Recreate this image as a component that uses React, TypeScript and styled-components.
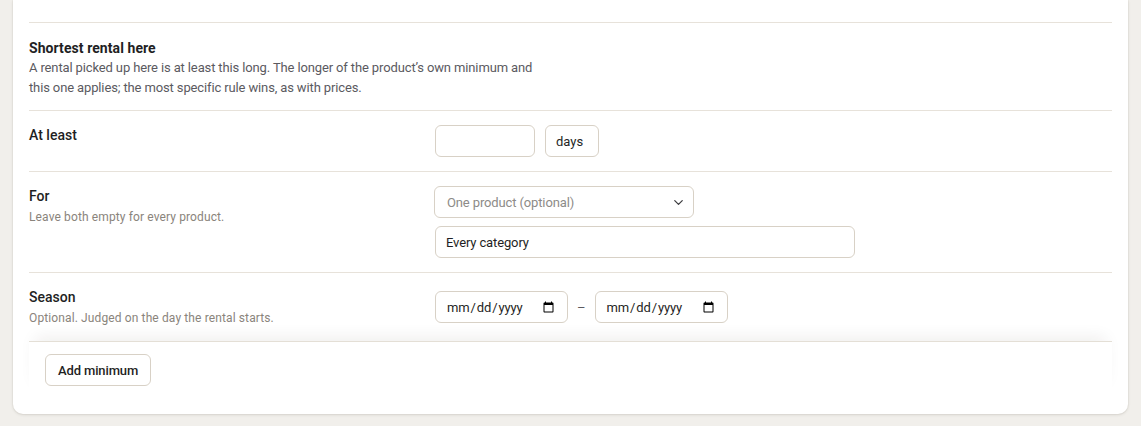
import React from "react";
import styled, { createGlobalStyle } from "styled-components";
import { ChevronDown } from "lucide-react";

const GlobalStyle = createGlobalStyle`
  html, body {
    margin: 0;
    background: #f1efeb;
  }
  body {
    font-family: Roboto, "Liberation Sans", sans-serif;
    color: #1f1f24;
  }
`;

const Page = styled.div`
  padding: 0 13px 12px;
`;

const Card = styled.div`
  background: #fff;
  border-radius: 0 0 10px 10px;
  box-shadow: 0 1px 3px rgba(60, 50, 30, 0.12), 0 0 0 1px rgba(60, 50, 30, 0.03);
  padding: 22px 16px 16px;
`;

const Section = styled.div`
  border-top: 1px solid #e7e2da;
  padding: 15px 0 12px;
`;

const Title = styled.div`
  font-size: 14px;
  font-weight: 700;
  line-height: 20px;
  letter-spacing: 0.005em;
  color: #1f1f24;
`;

const Description = styled.p`
  margin: 0;
  max-width: 520px;
  font-size: 13px;
  line-height: 20px;
  letter-spacing: -0.01em;
  color: #5b5a5f;
`;

const Row = styled.div<{ $center?: boolean }>`
  display: grid;
  grid-template-columns: 390px 1fr;
  column-gap: 16px;
  align-items: ${(p) => (p.$center ? "center" : "start")};
  border-top: 1px solid #e7e2da;
  padding: 14px 0;
`;

const LabelCol = styled.div`
  display: flex;
  flex-direction: column;
  gap: 2px;
`;

const Label = styled.div`
  font-size: 14px;
  font-weight: 500;
  line-height: 20px;
  color: #1f1f24;
`;

const Help = styled.div`
  font-size: 12px;
  line-height: 18px;
  letter-spacing: 0.01em;
  color: #8a847c;
`;

const Fields = styled.div`
  display: flex;
  flex-direction: column;
  align-items: flex-start;
  gap: 8px;
`;

const Inline = styled.div<{ $gap: number }>`
  display: flex;
  align-items: center;
  gap: ${(p) => p.$gap}px;
`;

const TextInput = styled.input<{ $width: number }>`
  box-sizing: border-box;
  width: ${(p) => p.$width}px;
  height: 32px;
  padding: 0 10px;
  border: 1px solid #d8d1c6;
  border-radius: 6px;
  background: #fff;
  font-family: Roboto, "Liberation Sans", sans-serif;
  font-size: 13px;
  letter-spacing: -0.01em;
  color: #1f1f24;
  outline: none;
`;

const Unit = styled.div`
  box-sizing: border-box;
  width: 54px;
  height: 32px;
  padding: 0 10px;
  display: flex;
  align-items: center;
  border: 1px solid #d8d1c6;
  border-radius: 6px;
  font-size: 13px;
  color: #1f1f24;
`;

const SelectWrap = styled.div`
  position: relative;
  width: 260px;
  margin-left: -1px;
`;

const Select = styled.select`
  box-sizing: border-box;
  width: 100%;
  height: 32px;
  padding: 0 30px 0 12px;
  border: 1px solid #d8d1c6;
  border-radius: 6px;
  background: #fff;
  appearance: none;
  font-family: Roboto, "Liberation Sans", sans-serif;
  font-size: 13px;
  letter-spacing: -0.01em;
  color: #8d8b88;
  outline: none;
`;

const Chevron = styled(ChevronDown)`
  position: absolute;
  right: 8px;
  top: 9px;
  color: #3d3d40;
  pointer-events: none;
`;

const Dash = styled.span`
  font-size: 13px;
  color: #5b5a5f;
`;

const Footer = styled.div`
  border-top: 1px solid #e4dfd6;
  box-shadow: 0 -10px 16px -6px rgba(40, 30, 10, 0.07);
  background: #fff;
  padding: 12px 16px;
`;

const Button = styled.button`
  height: 32px;
  padding: 0 12px;
  border: 1px solid #d8d1c6;
  border-radius: 6px;
  background: #fff;
  font-family: Roboto, "Liberation Sans", sans-serif;
  font-size: 13px;
  font-weight: 500;
  letter-spacing: -0.01em;
  color: #1f1f24;
  cursor: pointer;
`;

export default function App() {
  return (
    <Page>
      <GlobalStyle />
      <Card>
        <Section>
          <Title>Shortest rental here</Title>
          <Description>
            A rental picked up here is at least this long. The longer of the
            product’s own minimum and this one applies; the most specific rule
            wins, as with prices.
          </Description>
        </Section>

        <Row>
          <LabelCol>
            <Label>At least</Label>
          </LabelCol>
          <Inline $gap={10}>
            <TextInput $width={100} type="number" />
            <Unit>days</Unit>
          </Inline>
        </Row>

        <Row>
          <LabelCol>
            <Label>For</Label>
            <Help>Leave both empty for every product.</Help>
          </LabelCol>
          <Fields>
            <SelectWrap>
              <Select defaultValue="">
                <option value="">One product (optional)</option>
              </Select>
              <Chevron size={15} strokeWidth={2} />
            </SelectWrap>
            <TextInput $width={420} defaultValue="Every category" />
          </Fields>
        </Row>

        <Row $center>
          <LabelCol>
            <Label>Season</Label>
            <Help>Optional. Judged on the day the rental starts.</Help>
          </LabelCol>
          <Inline $gap={9}>
            <TextInput $width={133} type="date" />
            <Dash>–</Dash>
            <TextInput $width={133} type="date" />
          </Inline>
        </Row>

        <Footer>
          <Button>Add minimum</Button>
        </Footer>
      </Card>
    </Page>
  );
}
